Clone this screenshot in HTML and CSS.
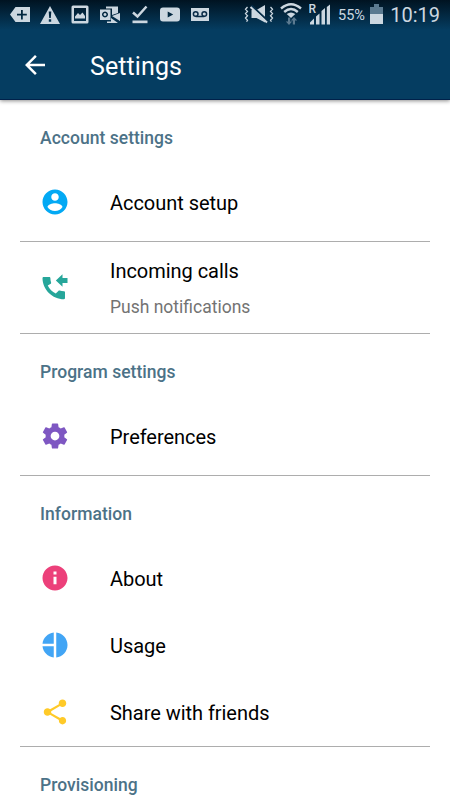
FILE: index.html
```html
<!DOCTYPE html>
<html lang="en">
<head>
  <meta charset="UTF-8" />
  <meta name="viewport" content="width=device-width, initial-scale=1.0" />
  <title>Settings</title>
  <link rel="stylesheet" href="styles.css">
</head>
<body>
  <header class="top">
    <div class="status-bar">
      <svg class="slot" viewBox="0 0 30 30"><path fill-rule="evenodd" d="M5 14.500L10.500 7H25v15H10.500zM16 10v3.800h-4v1.800h4v4h1.800v-4h4v-1.800h-4V10z"/></svg>
      <svg class="slot" viewBox="0 0 30 30"><path fill-rule="evenodd" d="M15 6L25 24H5zM13.700 11.500l.5 6.500h1.600l.5-6.500zM13.800 19.300v2.400h2.400v-2.400z"/></svg>
      <svg class="slot" viewBox="0 0 30 30"><path fill-rule="evenodd" d="M8 5.500h14q1.500 0 1.500 1.500v15q0 1.500-1.500 1.500H8q-1.500 0-1.500-1.500V7Q6.500 5.500 8 5.500zM9 8v13h12V8zM10 18.500v-2l3-3.500 2 2 2.500-2.500L20 16v2.500z"/></svg>
      <svg class="slot" viewBox="0 0 30 30"><path fill-rule="evenodd" d="M5 9.500h10.500V20H5zM10 11.500a3 3 0 1 0 .01 0zM10 13a1.500 1.500 0 1 1-.01 0z"/><path d="M11 6.500h12V13l-6 2V8.500h-6zM17 16l8-3v8zM16 18l7 5H12v-1.500h4z"/></svg>
      <svg class="slot" viewBox="0 0 30 30"><path d="M8 12.500l4.500 4L21.500 6.500" fill="none" stroke="#ccd7e0" stroke-width="2.500"/><path d="M7.500 20.500h15v2.700h-15z"/></svg>
      <svg class="slot" viewBox="0 0 30 30"><path fill-rule="evenodd" d="M8 7.500h14q3 0 3 3v8q0 3-3 3H8q-3 0-3-3v-8q0-3 3-3zM12.700 11.500v6l5.500-3z"/></svg>
      <svg class="slot" viewBox="0 0 30 30"><path d="M6 8h18v13H6z"/><g fill="none" stroke="#0a2c48" stroke-width="1.500"><circle cx="10.700" cy="14" r="2.300"/><circle cx="19.300" cy="14" r="2.300"/><path d="M10.700 16.500h8.600"/></g></svg>

      <div class="status-right">
        <svg class="vibrate" viewBox="0 0 30 30"><path d="M7.500 10h5L21 5v17.500L12.500 18h-5z"/><path d="M7.500 5.500l16 15" stroke="#052c48" stroke-width="2"/><path d="M6.500 7l16.500 15.500" stroke="#ccd7e0" stroke-width="2"/><path d="M3.500 7l-2 2.200 2 2.200-2 2.200 2 2.200-2 2.200 2 2.200-1 1.500M26.500 7l2 2.200-2 2.200 2 2.200-2 2.200 2 2.200-2 2.200 1 1.500" fill="none" stroke="#ccd7e0" stroke-width="1.300"/></svg>
        <svg class="wifi" viewBox="0 0 22 30"><g fill="none" stroke="#ccd7e0" stroke-width="2.400"><path d="M1 8.500Q11 0 21 8.500M4.200 12Q11 6 17.800 12"/></g><path d="M6.700 14Q11 10.800 15.300 14L11 18z"/><path class="arrows" d="M8 17.500h2.200V21.500h2L9 25l-3.200-3.500H8zM12.800 24.500v-4h-2l3.200-3.500 3.200 3.500H15v4z"/></svg>
        <svg class="signal" viewBox="0 0 22 30"><text x="-.5" y="12.500">R</text><path d="M1 24.500v-2l4-4v6zM7 24.500v-8l3.500-3v11zM12.500 24.500V11L16 8v16.500zM17.800 24.500V7L21 4.500v20z"/></svg>
        <span class="percent">55%</span>
        <svg class="battery" viewBox="0 0 13 30"><path class="empty" d="M0 7h4V4h5v3h4v8H0z"/><path d="M0 14h13v10H0z"/></svg>
        <span class="clock">10:19</span>
      </div>
    </div>

    <div class="toolbar">
      <svg class="back" viewBox="0 0 24 24"><path d="M20 11H7.830l5.590-5.590L12 4l-8 8 8 8 1.410-1.410L7.830 13H20v-2z"/></svg>
      <h1>Settings</h1>
    </div>
  </header>

  <main>
    <section>
      <h2>Account settings</h2>
      <div class="item">
        <svg class="icon account" viewBox="0 0 24 24"><path d="M12 2C6.480 2 2 6.480 2 12s4.480 10 10 10 10-4.480 10-10S17.520 2 12 2zm0 3c1.660 0 3 1.340 3 3s-1.340 3-3 3-3-1.340-3-3 1.340-3 3-3zm0 14.200c-2.500 0-4.710-1.280-6-3.220.03-1.990 4-3.080 6-3.080 1.990 0 5.970 1.090 6 3.080-1.290 1.940-3.500 3.220-6 3.220z"/></svg>
        <span class="label">Account setup</span>
      </div>
    </section>

    <section class="compact">
      <div class="item two-line">
        <svg class="icon calls" viewBox="0 0 24 24"><path d="M6.200 10c1.330 2.800 3.600 5 6.400 6.400l2.100-2.100c.27-.27.66-.35 1-.24 1.100.37 2.300.57 3.500.57.55 0 .8.250.8.800v4.600c0 .55-.25.970-.8.970C9.800 21 2 13.200 2 4c0-.55.450-.9 1-.9h4.400c.55 0 .9.350.9.900 0 1.250.2 2.450.57 3.570.11.350.03.740-.25 1.020z"/><path d="M22 4h-4V1l-5.300 5 5.300 5V8h4z"/></svg>
        <div class="lines">
          <span class="label">Incoming calls</span>
          <span class="note">Push notifications</span>
        </div>
      </div>
    </section>

    <section>
      <h2>Program settings</h2>
      <div class="item">
        <svg class="icon prefs" viewBox="0 0 24 24"><path d="M19.430 12.980c.04-.32.070-.64.070-.98s-.03-.66-.07-.98l2.110-1.650c.19-.15.240-.42.120-.64l-2-3.460c-.12-.22-.39-.3-.61-.22l-2.490 1c-.52-.4-1.080-.73-1.690-.98l-.38-2.650C14.460 2.180 14.250 2 14 2h-4c-.25 0-.46.180-.49.420l-.38 2.650c-.61.250-1.170.590-1.690.980l-2.490-1c-.23-.09-.49 0-.61.220l-2 3.460c-.13.220-.07.490.12.640l2.110 1.650c-.04.320-.07.650-.07.980s.03.660.07.980l-2.110 1.650c-.19.150-.24.420-.12.640l2 3.460c.12.220.39.300.61.220l2.490-1c.52.400 1.080.730 1.690.980l.38 2.650c.03.240.24.420.49.420h4c.25 0 .46-.18.490-.42l.38-2.650c.61-.25 1.170-.59 1.690-.98l2.490 1c.23.090.49 0 .61-.22l2-3.460c.12-.22.070-.49-.12-.64l-2.110-1.650zM12 15.500c-1.930 0-3.500-1.570-3.500-3.500s1.570-3.500 3.500-3.500 3.500 1.570 3.500 3.500-1.570 3.500-3.500 3.500z"/></svg>
        <span class="label">Preferences</span>
      </div>
    </section>

    <section class="information">
      <h2>Information</h2>
      <div class="item">
        <svg class="icon about" viewBox="0 0 24 24"><path d="M12 2C6.480 2 2 6.480 2 12s4.480 10 10 10 10-4.480 10-10S17.520 2 12 2zm1.200 15h-2.400v-6h2.400v6zm0-7.800h-2.400V6.800h2.400v2.400z"/></svg>
        <span class="label">About</span>
      </div>
      <div class="item">
        <svg class="icon usage" viewBox="0 0 24 24"><path d="M11 2v9H2c.5-4.700 4.300-8.500 9-9zM13 2c5 .5 9 4.800 9 10s-4 9.500-9 10zM11 13v9c-4.700-.5-8.500-4.300-9-9z"/></svg>
        <span class="label">Usage</span>
      </div>
      <div class="item">
        <svg class="icon share" viewBox="0 0 24 24"><path d="M18 16.080c-.76 0-1.440.300-1.960.770L8.910 12.700c.05-.23.090-.46.090-.7s-.04-.47-.09-.7l7.050-4.110c.54.500 1.250.810 2.040.810 1.660 0 3-1.340 3-3s-1.340-3-3-3-3 1.340-3 3c0 .24.040.470.090.7L8.040 9.810C7.500 9.310 6.790 9 6 9c-1.660 0-3 1.340-3 3s1.340 3 3 3c.79 0 1.500-.31 2.040-.81l7.120 4.160c-.05.210-.08.430-.08.650 0 1.610 1.310 2.920 2.920 2.920s2.920-1.310 2.920-2.920-1.310-2.920-2.920-2.920z"/></svg>
        <span class="label">Share with friends</span>
      </div>
    </section>

    <section>
      <h2>Provisioning</h2>
    </section>
  </main>
</body>
</html>
```

FILE: styles.css
```css
* {
  box-sizing: border-box;
}
body {
  margin: 0;
  height: 800px;
  overflow: hidden;
  display: flex;
  flex-direction: column;
  font-family: Roboto, sans-serif;
  background: #fff;
  color: #111;
}
svg {
  display: block;
  flex: none;
}
h1, h2 {
  margin: 0;
}
.top {
  flex: none;
  height: 100px;
  background: linear-gradient(#001321, #053d61 30px, #053d61);
  border-bottom: 1px solid #00214a;
  box-shadow: 0 1px 4px rgba(0, 0, 0, 0.45);
}
.status-bar {
  display: flex;
  height: 30px;
  padding: 0 10px 0 5px;
  fill: #ccd7e0;
  color: #ccd7e0;
}
.slot {
  width: 30px;
  height: 30px;
}
.status-right {
  display: flex;
  margin-left: auto;
}
.vibrate {
  width: 30px;
  height: 30px;
  margin-right: 6px;
}
.wifi, .signal {
  width: 22px;
  height: 30px;
  margin-right: 7px;
}
.signal text {
  font-size: 12px;
  font-weight: 500;
}
.arrows, .empty {
  fill: #5b7a90;
}
.percent {
  width: 32px;
  font-size: 14.5px;
  line-height: 32px;
}
.battery {
  width: 13px;
  height: 30px;
}
.clock {
  width: 57px;
  text-align: right;
  font-size: 20px;
  line-height: 31px;
}
.toolbar {
  display: flex;
  align-items: center;
  height: 70px;
  padding-left: 20px;
}
.back {
  width: 30px;
  height: 30px;
  fill: #fff;
}
h1 {
  margin-left: 40px;
  padding-top: 3px;
  font-size: 25px;
  font-weight: 400;
  letter-spacing: 0.1px;
  color: #fff;
}
main {
  padding: 0 20px;
}
section {
  padding-bottom: 5px;
  border-bottom: 1px solid #adadad;
}
h2 {
  height: 69px;
  padding: 0 20px;
  line-height: 76px;
  font-size: 17.5px;
  font-weight: 500;
  letter-spacing: 0.03px;
  color: #4c7287;
}
.item {
  display: flex;
  align-items: center;
  gap: 40px;
  height: 67px;
  padding: 0 20px;
}
.label {
  font-size: 20px;
  line-height: 24px;
  letter-spacing: -0.04px;
  color: #000;
}
.compact {
  padding-bottom: 0;
}
.two-line {
  height: 91px;
}
.lines {
  display: flex;
  flex-direction: column;
  gap: 12px;
  padding-top: 3px;
}
.note {
  font-size: 17.5px;
  line-height: 24px;
  color: #737373;
}
.information {
  padding-bottom: 0;
}
.icon {
  width: 30px;
  height: 30px;
  margin-bottom: 1px;
}
.account { fill: #03a9f4; }
.calls {
  margin: 1px 0 0;
  fill: #26a69a;
}
.prefs { fill: #7e57c2; }
.about { fill: #ec407a; }
.usage { fill: #42a5f5; }
.share { fill: #ffca28; }
```
